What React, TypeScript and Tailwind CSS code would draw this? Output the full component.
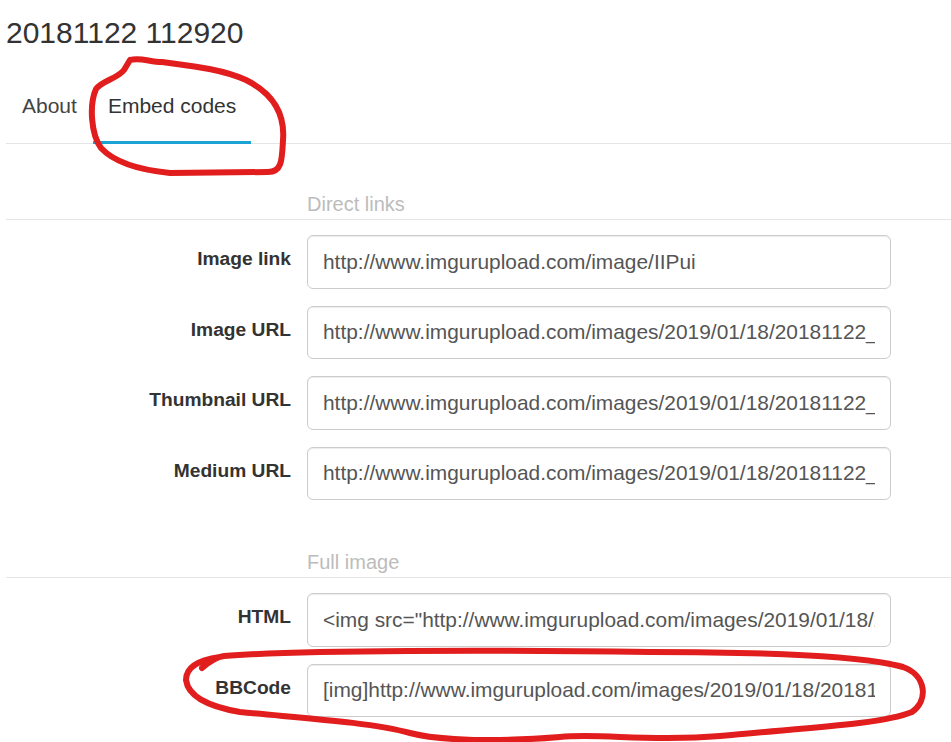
import React from "react";

const base = "http://www.imgurupload.com/images/2019/01/18/20181122_112920";

const sections = [
  {
    title: "Direct links",
    rows: [
      { label: "Image link", value: "http://www.imgurupload.com/image/IIPui" },
      { label: "Image URL", value: `${base}.jpg` },
      { label: "Thumbnail URL", value: `${base}.th.jpg` },
      { label: "Medium URL", value: `${base}.md.jpg` },
    ],
  },
  {
    title: "Full image",
    rows: [
      { label: "HTML", value: `<img src="${base}.jpg" alt="20181122 112920" border="0">` },
      { label: "BBCode", value: `[img]${base}.jpg[/img]` },
    ],
  },
];

function Section({ title, rows, first }: { title: string; rows: { label: string; value: string }[]; first?: boolean }) {
  return (
    <div>
      <div
        className={`${first ? "mt-[48px]" : "mt-[50px]"} border-b border-[#e5e5e5] pb-[3px] pl-[301px] text-[20px] leading-[24px] text-[#bcbcbc]`}
      >
        {title}
      </div>
      <div className="mt-[15px] flex flex-col gap-[17px]">
        {rows.map((r) => (
          <div key={r.label} className="flex items-start gap-[16px]">
            <label className="w-[285px] pt-[12px] text-right text-[19.2px] font-bold leading-[24px] text-[#333]">
              {r.label}
            </label>
            <input
              readOnly
              value={r.value}
              className="h-[53.5px] w-[584px] rounded-[6px] border border-[#cccccc] bg-white px-[15px] text-[20.9px] text-[#555] shadow-[inset_0_1px_1px_rgba(0,0,0,0.075)] outline-none"
              style={{ fontFamily: '"Liberation Sans", Arial, sans-serif' }}
            />
          </div>
        ))}
      </div>
    </div>
  );
}

export default function App() {
  return (
    <div className="relative min-h-screen w-full overflow-hidden bg-white pl-[6px]" style={{ fontFamily: '"Liberation Sans", Arial, sans-serif' }}>
      <h1 className="pt-[15px] text-[30px] font-normal leading-[36px] text-[#333]">20181122 112920</h1>

      <ul className="mt-[19px] flex border-b border-[#e5e5e5] pl-px">
        <li className="relative -mb-px border-b-[3px] border-transparent px-[15px] pb-[23px] pt-[24px] text-[21px] leading-[24px] text-[#444]">
          About
        </li>
        <li className="relative z-10 -mb-px ml-px border-b-[3px] border-[#1ca3d6] px-[15px] pb-[23px] pt-[24px] text-[21px] leading-[24px] text-[#333]">
          Embed codes
        </li>
      </ul>

      {sections.map((s, i) => (
        <Section key={s.title} title={s.title} rows={s.rows} first={i === 0} />
      ))}

      {/* hand-drawn annotations */}
      <svg className="pointer-events-none absolute left-0 top-0 z-20" width="951" height="742" viewBox="0 0 951 742" fill="none">
        <path
          d="M130,60 C140,57 150,62 162,62 C192,66 222,69 246,80 C274,94 285,115 283,140 C282,160 282,172 268,172 L170,173 C140,170 114,162 101,148 C91,134 89,105 96,89 C103,80 117,79 124,70 L130,60"
          stroke="#e11d1d"
          strokeWidth="6"
          strokeLinecap="round"
          strokeLinejoin="round"
        />
        <path
          d="M202,668 C210,661 216,657 224,656 C300,650 500,650 650,652 C780,652 868,657 903,667 C926,675 929,700 912,712 C880,725 800,728 720,736 C650,742 600,733 560,737 C500,742 440,741 410,733 C370,722 300,718 240,712 C205,706 188,695 186,680 C186,668 198,660 220,657"
          stroke="#e11d1d"
          strokeWidth="6"
          strokeLinecap="round"
          strokeLinejoin="round"
        />
      </svg>
    </div>
  );
}
